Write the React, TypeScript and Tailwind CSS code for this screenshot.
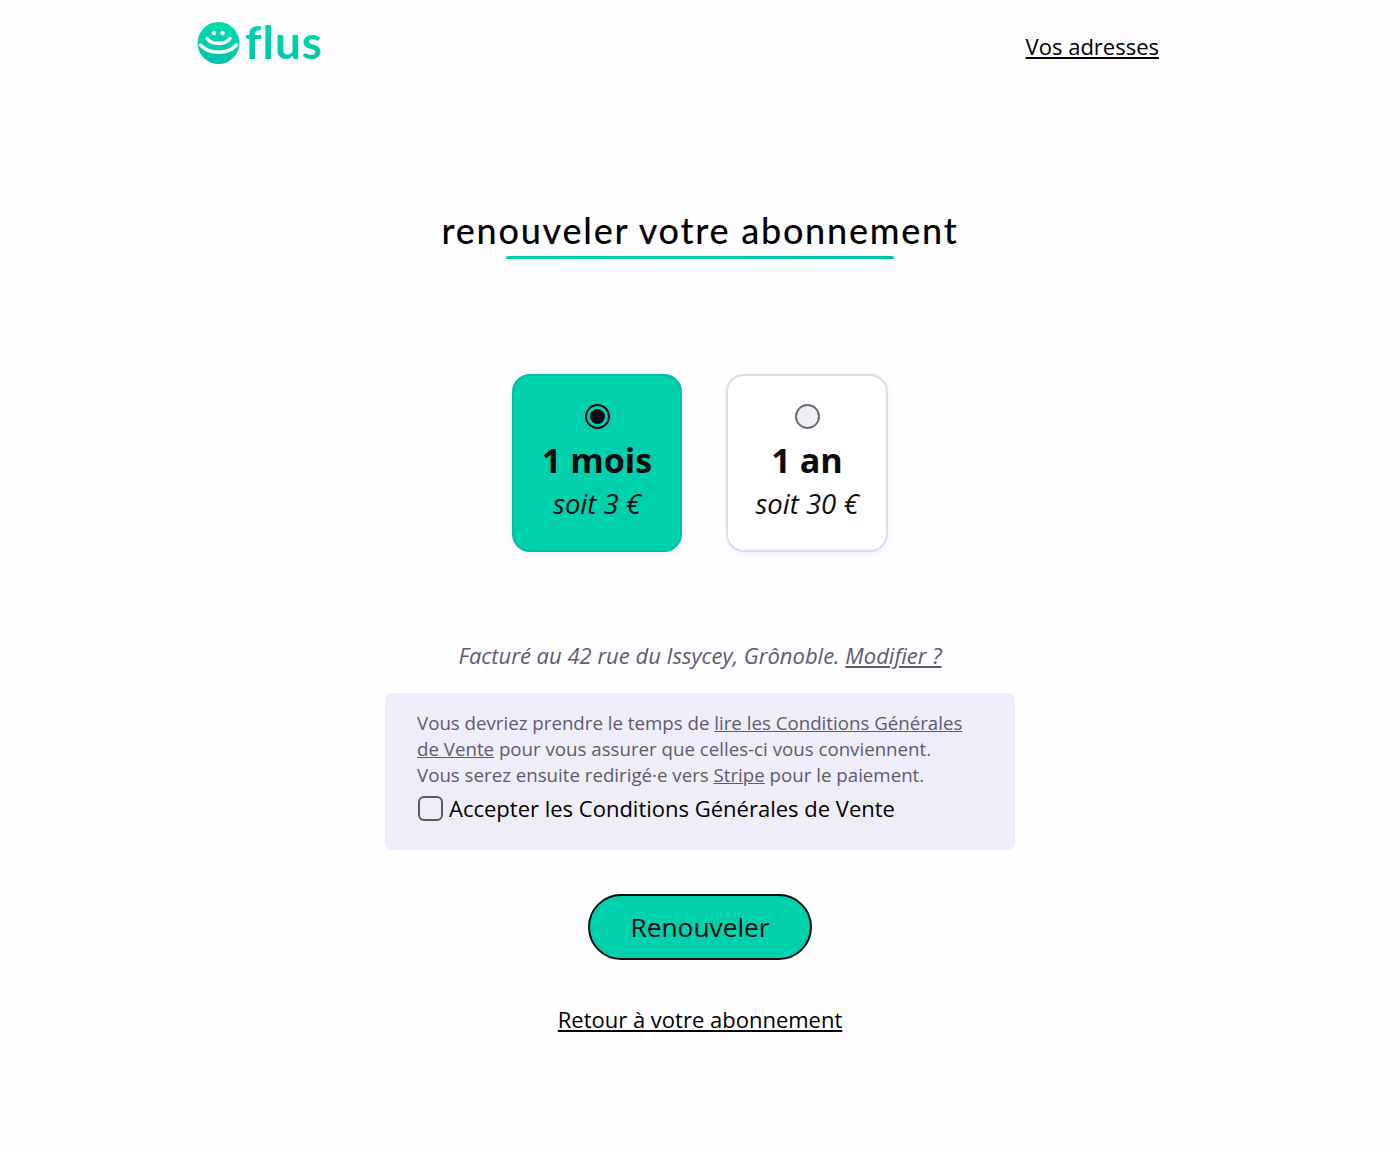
export default function App() {
  return (
    <div className="min-h-[1150px] bg-[#fefdff] text-[#0d0b10] font-['Open_Sans',sans-serif] flex flex-col items-center">
      <header className="w-full h-[96px] flex items-start justify-between pl-[197px] pr-[241px]">
        <a className="flex items-center gap-[5px] mt-[22px] h-[42px]">
          <svg width="43" height="42" viewBox="0 0 43 42">
            <defs>
              <linearGradient id="g" x1="0" y1="0" x2="0" y2="1">
                <stop offset="0" stopColor="#00dcae" />
                <stop offset="1" stopColor="#00c2ac" />
              </linearGradient>
            </defs>
            <circle cx="21.5" cy="21" r="21" fill="url(#g)" />
            <circle cx="17" cy="11" r="2.300" fill="#fefdff" />
            <circle cx="25.500" cy="11" r="2.300" fill="#fefdff" />
            <path d="M10 16.500 C15 23 28 23 33 16.500" fill="none" stroke="#fefdff" strokeWidth="3.500" strokeLinecap="round" />
            <path d="M3.500 23 C12 32.500 31 32.500 39.500 23" fill="none" stroke="#fefdff" strokeWidth="3.500" strokeLinecap="round" />
          </svg>
          <span className="font-['Lato',sans-serif] text-[46px] leading-[42px] font-bold bg-gradient-to-b from-[#00d9ae] to-[#00c4ac] bg-clip-text text-transparent tracking-[1px] -translate-y-[1px]">flus</span>
        </a>
        <a className="mt-[30px] text-[22px] leading-[32px] underline text-black">Vos adresses</a>
      </header>
      <main className="flex flex-col items-center w-[630px]">
        <div className="mt-[109px] flex flex-col items-center">
          <h1 className="font-['Lato',sans-serif] font-medium text-[36px] leading-[50px] tracking-[1.750px] text-black whitespace-nowrap">renouveler votre abonnement</h1>
          <div className="mt-[1px] w-[388px] h-[3px] rounded-full bg-gradient-to-r from-[#00d0b0] to-[#00c0b0]" />
        </div>
        <div className="mt-[115px] flex gap-[44px]">
          <div className="w-[170px] h-[178px] rounded-[18px] bg-[#00d1ad] border-2 border-[#00bfa8] flex flex-col items-center pt-[28px] shadow-[0_2px_6px_rgba(80,60,120,0.08)]">
            <span className="w-[25px] h-[25px] rounded-full border-2 border-[#0d0b10] flex items-center justify-center">
              <span className="w-[15px] h-[15px] rounded-full bg-[#0d0b10]" />
            </span>
            <div className="mt-[8px] text-[34.200px] leading-[46px] font-bold">1 mois</div>
            <div className="mt-[3px] text-[27.500px] leading-[36px] italic">soit 3 €</div>
          </div>
          <div className="w-[162px] h-[178px] rounded-[18px] bg-white border-2 border-[#e0dbe8] flex flex-col items-center pt-[28px] shadow-[0_2px_6px_rgba(80,60,120,0.08)]">
            <span className="w-[25px] h-[25px] rounded-full border-2 border-[#6f6a77] bg-[#f0eef4]" />
            <div className="mt-[8px] text-[34.200px] leading-[46px] font-bold">1 an</div>
            <div className="mt-[3px] text-[27.500px] leading-[36px] italic">soit 30 €</div>
          </div>
        </div>
        <p className="mt-[87px] text-[22px] leading-[32px] italic text-[#5f5a6e] whitespace-nowrap">
          Facturé au 42 rue du Issycey, Grônoble. <a className="underline">Modifier ?</a>
        </p>
        <div className="mt-[22px] w-[630px] h-[157px] rounded-[8px] bg-[#efedf9] px-[32px] pt-[17px]">
          <p className="text-[18.700px] leading-[26px] text-[#5f5a6e]">
            Vous devriez prendre le temps de <a className="underline">lire les Conditions Générales de Vente</a> pour vous assurer que celles-ci vous conviennent.
            <br />
            Vous serez ensuite redirigé·e vers <a className="underline">Stripe</a> pour le paiement.
          </p>
          <label className="mt-[4px] flex items-center gap-[6px] text-[22px] leading-[32px] text-black">
            <span className="ml-[1px] w-[25px] h-[25px] rounded-[6px] border-2 border-[#5d5766] bg-[#f0eef4]" />
            Accepter les Conditions Générales de Vente
          </label>
        </div>
        <button className="mt-[44px] w-[224px] h-[66px] pt-[2px] rounded-full bg-[#00d1ad] border-2 border-[#0d0b10] text-[26.300px] text-[#0d0b10]">Renouveler</button>
        <a className="mt-[43px] text-[22px] leading-[32px] underline text-black">Retour à votre abonnement</a>
      </main>
    </div>
  );
}
